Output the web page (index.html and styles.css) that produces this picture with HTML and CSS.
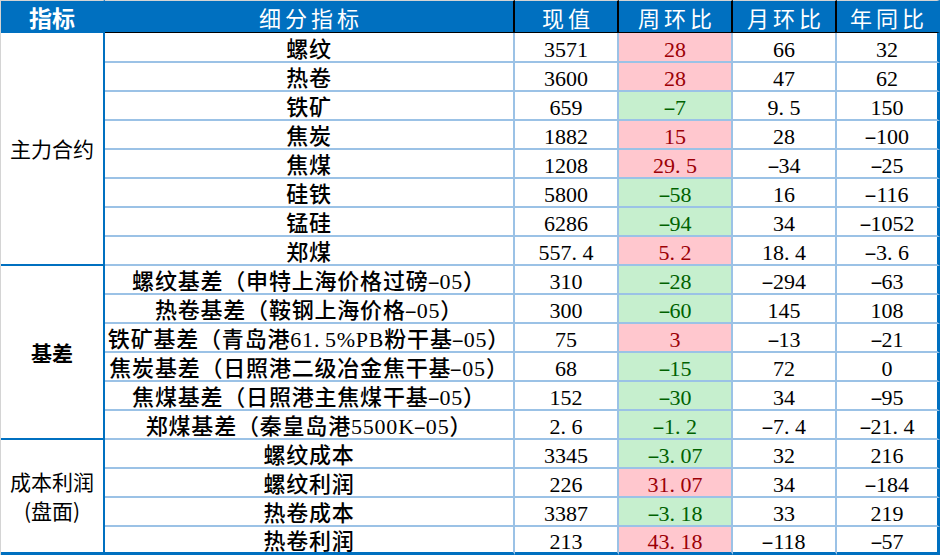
FILE: index.html
```html
<!DOCTYPE html>
<html lang="zh-CN">
<head>
<meta charset="utf-8">
<title>指标</title>
<link rel="stylesheet" href="styles.css">
</head>
<body>
<div class="sheet">
  <div class="cell hd first">指标</div>
  <div class="cell hd">细分指标</div>
  <div class="cell hd">现值</div>
  <div class="cell hd">周环比</div>
  <div class="cell hd">月环比</div>
  <div class="cell hd end">年同比</div>

  <div class="cell grp g1">主力合约</div>
  <div class="cell lbl">螺纹</div><div class="cell">3571</div><div class="cell up">28</div><div class="cell">66</div><div class="cell c6">32</div>
  <div class="cell lbl">热卷</div><div class="cell">3600</div><div class="cell up">28</div><div class="cell">47</div><div class="cell c6">62</div>
  <div class="cell lbl">铁矿</div><div class="cell">659</div><div class="cell dn"><span class="m">-</span>7</div><div class="cell">9<span class="p">.</span>5</div><div class="cell c6">150</div>
  <div class="cell lbl">焦炭</div><div class="cell">1882</div><div class="cell up">15</div><div class="cell">28</div><div class="cell c6"><span class="m">-</span>100</div>
  <div class="cell lbl">焦煤</div><div class="cell">1208</div><div class="cell up">29<span class="p">.</span>5</div><div class="cell"><span class="m">-</span>34</div><div class="cell c6"><span class="m">-</span>25</div>
  <div class="cell lbl">硅铁</div><div class="cell">5800</div><div class="cell dn"><span class="m">-</span>58</div><div class="cell">16</div><div class="cell c6"><span class="m">-</span>116</div>
  <div class="cell lbl">锰硅</div><div class="cell">6286</div><div class="cell dn"><span class="m">-</span>94</div><div class="cell">34</div><div class="cell c6"><span class="m">-</span>1052</div>
  <div class="cell lbl">郑煤</div><div class="cell">557<span class="p">.</span>4</div><div class="cell up">5<span class="p">.</span>2</div><div class="cell">18<span class="p">.</span>4</div><div class="cell c6"><span class="m">-</span>3<span class="p">.</span>6</div>

  <div class="cell grp g2 bold">基差</div>
  <div class="cell lbl">螺纹基差（申特上海价格过磅<span class="m">-</span>05）</div><div class="cell">310</div><div class="cell dn"><span class="m">-</span>28</div><div class="cell"><span class="m">-</span>294</div><div class="cell c6"><span class="m">-</span>63</div>
  <div class="cell lbl">热卷基差（鞍钢上海价格<span class="m">-</span>05）</div><div class="cell">300</div><div class="cell dn"><span class="m">-</span>60</div><div class="cell">145</div><div class="cell c6">108</div>
  <div class="cell lbl">铁矿基差（青岛港61<span class="p">.</span>5%PB粉干基<span class="m">-</span>05）</div><div class="cell">75</div><div class="cell up">3</div><div class="cell"><span class="m">-</span>13</div><div class="cell c6"><span class="m">-</span>21</div>
  <div class="cell lbl">焦炭基差（日照港二级冶金焦干基<span class="m">-</span>05）</div><div class="cell">68</div><div class="cell dn"><span class="m">-</span>15</div><div class="cell">72</div><div class="cell c6">0</div>
  <div class="cell lbl">焦煤基差（日照港主焦煤干基<span class="m">-</span>05）</div><div class="cell">152</div><div class="cell dn"><span class="m">-</span>30</div><div class="cell">34</div><div class="cell c6"><span class="m">-</span>95</div>
  <div class="cell lbl">郑煤基差（秦皇岛港5500K<span class="m">-</span>05）</div><div class="cell">2<span class="p">.</span>6</div><div class="cell dn"><span class="m">-</span>1<span class="p">.</span>2</div><div class="cell"><span class="m">-</span>7<span class="p">.</span>4</div><div class="cell c6"><span class="m">-</span>21<span class="p">.</span>4</div>

  <div class="cell grp g3 last"><span>成本利润</span><span>(盘面)</span></div>
  <div class="cell lbl">螺纹成本</div><div class="cell">3345</div><div class="cell dn"><span class="m">-</span>3<span class="p">.</span>07</div><div class="cell">32</div><div class="cell c6">216</div>
  <div class="cell lbl">螺纹利润</div><div class="cell">226</div><div class="cell up">31<span class="p">.</span>07</div><div class="cell">34</div><div class="cell c6"><span class="m">-</span>184</div>
  <div class="cell lbl">热卷成本</div><div class="cell">3387</div><div class="cell dn"><span class="m">-</span>3<span class="p">.</span>18</div><div class="cell">33</div><div class="cell c6">219</div>
  <div class="cell lbl last">热卷利润</div><div class="cell last">213</div><div class="cell up last">43<span class="p">.</span>18</div><div class="cell last"><span class="m">-</span>118</div><div class="cell c6 last"><span class="m">-</span>57</div>
</div>
</body>
</html>
```

FILE: styles.css
```css
* {
  box-sizing: border-box;
  margin: 0;
  padding: 0;
}

html, body {
  background: #ffffff;
}

body {
  width: 940px;
  height: 555px;
  overflow: hidden;
}

.sheet {
  display: grid;
  grid-template-columns: 104px 410px 104px 114px 104px 103px;
  grid-template-rows: 33px 30px repeat(16, 29px) 28px;
  width: 940px;
  border-left: 1px solid #d4d4d4;
}

.cell {
  display: flex;
  align-items: center;
  justify-content: center;
  padding-top: 4px;
  border-right: 2px solid #9bc2e6;
  border-bottom: 2px solid #9bc2e6;
  font-family: "Liberation Serif", "Noto Sans CJK SC", serif;
  font-size: 22px;
  line-height: 25px;
  color: #000000;
  white-space: nowrap;
}

.hd {
  padding: 1px 0 0 4px;
  background: #0070c0;
  color: #ffffff;
  border-top: 1px solid #d4d4d4;
  border-bottom: 1px solid #000000;
  border-right: 2px solid #000000;
  font-family: "Noto Sans CJK SC", sans-serif;
  font-size: 22px;
  letter-spacing: 4px;
  line-height: 28px;
}

.hd.first {
  padding: 1px 0 0 0;
  border-bottom-color: #0070c0;
  border-right-color: #0070c0;
  font-size: 23px;
  font-weight: 700;
  letter-spacing: 0;
}

.hd.end {
  border-right: 3px solid #0070c0;
}

.lbl {
  font-weight: 500;
  letter-spacing: 0.8px;
}

.grp {
  flex-direction: column;
  padding: 0;
  border-right: 2px solid #0070c0;
  border-bottom: 2px solid #0070c0;
  font-family: "Noto Sans CJK SC", sans-serif;
  font-size: 21px;
  line-height: 29px;
}

.grp.bold {
  font-weight: 700;
}

.g1 { grid-row: span 8; }
.g2 { grid-row: span 6; }
.g3 { grid-row: span 4; }

.c6 {
  border-right: 3px solid #0070c0;
}

.last {
  border-bottom: 3px solid #0070c0;
}

.up {
  background: #ffc7ce;
  color: #9c0006;
}

.dn {
  background: #c6efce;
  color: #006100;
}

.p {
  display: inline-block;
  width: 0.5em;
  text-align: left;
}

.m {
  display: inline-block;
  width: 0.5em;
  text-align: center;
  transform: translateY(-1px) scaleX(1.7);
}
```
